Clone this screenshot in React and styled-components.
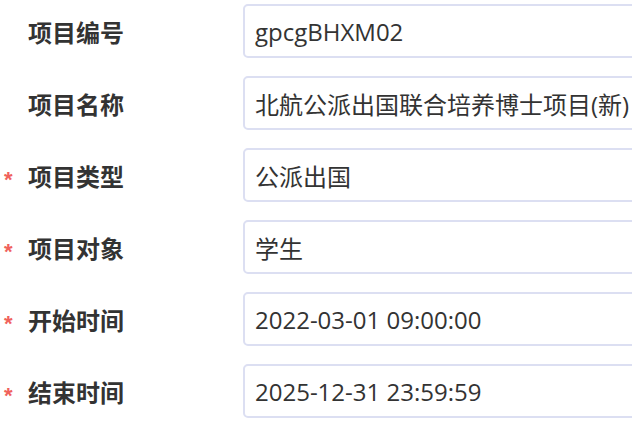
import React from "react";
import styled, { createGlobalStyle } from "styled-components";

const Global = createGlobalStyle`
  html, body { margin: 0; padding: 0; background: #ffffff; overflow: hidden; }
  body { font-family: "Noto Sans", "Noto Sans CJK SC", sans-serif; }
`;

const Form = styled.div`
  display: flex;
  flex-direction: column;
  gap: 18px;
  padding-top: 4px;
  width: 632px;
  overflow: hidden;
`;

const Row = styled.div`
  display: flex;
  align-items: center;
  height: 54px;
`;

const Label = styled.div`
  width: 243px;
  flex: none;
  display: flex;
  align-items: center;
  box-sizing: border-box;
  padding-left: 4px;
  font-family: "Noto Sans CJK SC", "Noto Sans", sans-serif;
  font-size: 24px;
  font-weight: 700;
  color: #333333;
`;

const Star = styled.span`
  width: 24px;
  flex: none;
  color: ${(p) => (p.$on ? "#f0615c" : "transparent")};
  font-family: "Liberation Sans", sans-serif;
  font-size: 22px;
  font-weight: 700;
  line-height: 1;
  padding-top: 9px;
`;

const Box = styled.div`
  flex: none;
  width: 440px;
  height: 54px;
  box-sizing: border-box;
  border: 2px solid #dcdff2;
  border-radius: 5px;
  padding-left: 10px;
  display: flex;
  align-items: center;
  font-family: "Open Sans", "Noto Sans CJK SC", sans-serif;
  font-size: 24px;
  color: #333333;
  white-space: nowrap;
`;

const rows = [
  { label: "项目编号", value: "gpcgBHXM02", req: false },
  { label: "项目名称", value: "北航公派出国联合培养博士项目(新)", req: false },
  { label: "项目类型", value: "公派出国", req: true },
  { label: "项目对象", value: "学生", req: true },
  { label: "开始时间", value: "2022-03-01 09:00:00", req: true },
  { label: "结束时间", value: "2025-12-31 23:59:59", req: true },
];

export default function App() {
  return (
    <>
      <Global />
      <Form>
        {rows.map((r) => (
          <Row key={r.label}>
            <Label>
              <Star $on={r.req}>*</Star>
              {r.label}
            </Label>
            <Box>{r.value}</Box>
          </Row>
        ))}
      </Form>
    </>
  );
}
